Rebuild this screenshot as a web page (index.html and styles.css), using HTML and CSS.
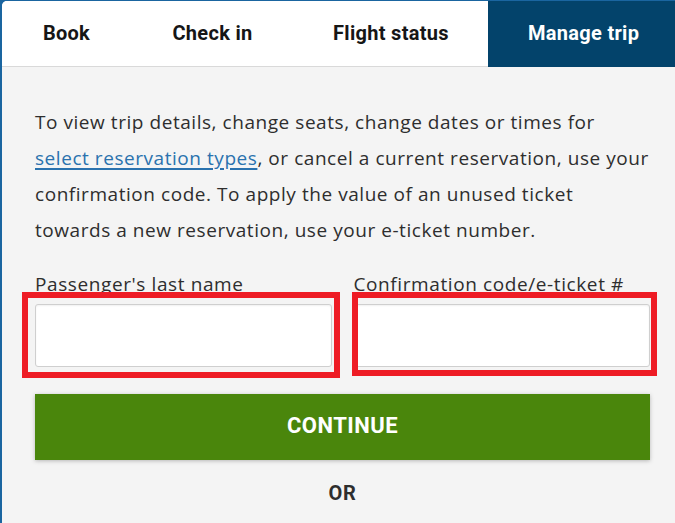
FILE: index.html
```html
<!DOCTYPE html>
<html lang="en">
<head>
    <meta charset="UTF-8">
    <meta name="viewport" content="width=device-width, initial-scale=1.0">
    <title>Manage trip</title>
    <link rel="stylesheet" href="styles.css">
</head>
<body>
    <div class="frame">
        <div class="panel">
            <nav class="tabs">
                <a class="tab tab-book">Book</a>
                <a class="tab tab-checkin">Check in</a>
                <a class="tab tab-status">Flight status</a>
                <a class="tab active">Manage trip</a>
            </nav>

            <div class="content">
                <p class="intro">
                    To view trip details, change seats, change dates or times for<br>
                    <a href="#" class="link">select reservation types</a>, or cancel a current reservation, use your<br>
                    confirmation code. To apply the value of an unused ticket<br>
                    towards a new reservation, use your e-ticket number.
                </p>

                <div class="fields">
                    <div class="field">
                        <label for="last-name">Passenger's last name</label>
                        <div class="input-wrap">
                            <input id="last-name" type="text">
                            <span class="mark mark-left"></span>
                        </div>
                    </div>
                    <div class="field">
                        <label for="code">Confirmation code/e-ticket #</label>
                        <div class="input-wrap">
                            <input id="code" type="text">
                            <span class="mark mark-right"></span>
                        </div>
                    </div>
                </div>

                <button class="continue">CONTINUE</button>
                <div class="or">OR</div>
            </div>
        </div>
    </div>
</body>
</html>
```

FILE: styles.css
```css
html, body {
    margin: 0;
    height: 100%;
}
body {
    font-family: "Open Sans", "Liberation Sans", sans-serif;
    background: #1a65a0;
    overflow: hidden;
}
.frame {
    height: 100%;
    padding: 1px 0 0 2px;
    box-sizing: border-box;
}
.panel {
    background: #f4f4f4;
    height: 100%;
    border-top-left-radius: 5px;
    overflow: hidden;
}
.tabs {
    display: flex;
    height: 66px;
    background: #fff;
}
.tab {
    display: flex;
    align-items: center;
    justify-content: center;
    padding-bottom: 2px;
    box-sizing: border-box;
    font-family: Roboto, "Liberation Sans", sans-serif;
    font-size: 20px;
    font-weight: 700;
    letter-spacing: 0.3px;
    color: #161616;
    border-bottom: 1px solid #d9d9d9;
    white-space: nowrap;
}
.tab-book { width: 129px; }
.tab-checkin { width: 163px; }
.tab-status { width: 194px; }
.tab.active {
    flex: 1;
    justify-content: flex-start;
    padding-left: 40px;
    background: #03436b;
    color: #fff;
    border-bottom-color: #03436b;
}
.content {
    padding: 37px 25px 0 33px;
}
.intro {
    margin: 0;
    font-size: 19px;
    letter-spacing: 0.55px;
    line-height: 36px;
    color: #2e2e2e;
    white-space: nowrap;
}
.link {
    color: #2a72ae;
    text-decoration: underline;
    text-decoration-thickness: 2px;
    text-underline-offset: 3px;
}
.fields {
    display: grid;
    grid-template-columns: 1fr 1fr;
    gap: 22px;
    margin-top: 24px;
}
.field label {
    display: block;
    font-size: 19px;
    letter-spacing: 0.6px;
    line-height: 24px;
    color: #2e2e2e;
    margin-bottom: 8px;
    white-space: nowrap;
}
.input-wrap {
    position: relative;
}
.input-wrap input {
    display: block;
    width: 100%;
    height: 63px;
    box-sizing: border-box;
    border: 1px solid #cfcfcf;
    border-radius: 3px;
    background: #fff;
    box-shadow: inset 0 1px 2px rgba(0,0,0,0.06);
}
.mark {
    position: absolute;
    border: 6px solid #ee1c25;
    pointer-events: none;
}
.mark-left {
    left: -13px;
    top: -12px;
    right: -8px;
    bottom: -11px;
}
.mark-right {
    left: -2px;
    top: -12px;
    right: -7px;
    bottom: -9px;
}
.continue {
    display: block;
    width: 100%;
    height: 66px;
    margin-top: 27px;
    padding-bottom: 4px;
    background: #4a860c;
    color: #fff;
    border: none;
    font-family: Roboto, "Liberation Sans", sans-serif;
    font-size: 22px;
    font-weight: 700;
    letter-spacing: 0.5px;
    box-shadow: 0 1px 4px rgba(0,0,0,0.25);
}
.or {
    margin-top: 21px;
    text-align: center;
    font-family: Roboto, "Liberation Sans", sans-serif;
    font-size: 20px;
    font-weight: 700;
    letter-spacing: 0.8px;
    color: #2e2e2e;
}
```
